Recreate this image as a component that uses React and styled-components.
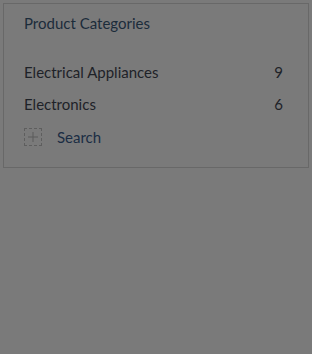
import React from "react";
import styled, { createGlobalStyle } from "styled-components";

const Global = createGlobalStyle`
  html, body { margin: 0; padding: 0; background: #7a7a7a; }
  body { font-family: Lato, "Open Sans", sans-serif; }
`;

const Page = styled.div`
  padding: 3px 3px 0 3px;
  height: 354px;
  box-sizing: border-box;
`;

const Panel = styled.section`
  border: 1px solid #686868;
  padding: 9px 25px 14px 20px;
  display: flex;
  flex-direction: column;
`;

const Title = styled.h3`
  margin: 0 0 23px 0;
  font-size: 15px;
  font-weight: 400;
  line-height: 20px;
  color: #1c2c3a;
`;

const Row = styled.div`
  display: flex;
  justify-content: space-between;
  align-items: center;
  height: 32px;
  font-size: 15px;
  color: #1e2228;
`;

const Count = styled.span`
  color: #1e2228;
`;

const AddRow = styled.div`
  display: flex;
  align-items: center;
  gap: 15px;
  height: 33px;
  font-size: 15px;
  color: #1a2d44;
`;

const AddBox = styled.span`
  width: 16px;
  height: 16px;
  border: 1px dashed #5e5e5e;
  display: flex;
  align-items: center;
  justify-content: center;
`;

export default function App() {
  return (
    <>
      <Global />
      <Page>
        <Panel>
          <Title>Product Categories</Title>
          <Row>
            <span>Electrical Appliances</span>
            <Count>9</Count>
          </Row>
          <Row>
            <span>Electronics</span>
            <Count>6</Count>
          </Row>
          <AddRow>
            <AddBox>
              <svg width="10" height="10" viewBox="0 0 10 10">
                <path d="M5 0v10M0 5h10" stroke="#5a5a5a" strokeWidth="1" />
              </svg>
            </AddBox>
            <span>Search</span>
          </AddRow>
        </Panel>
      </Page>
    </>
  );
}
